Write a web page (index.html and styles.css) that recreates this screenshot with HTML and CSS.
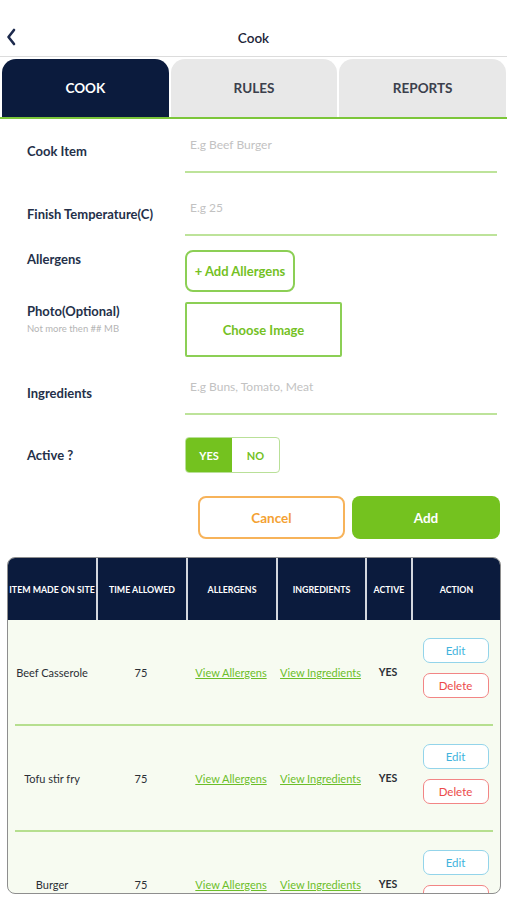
FILE: index.html
```html
<!DOCTYPE html>
<html lang="en">
<head>
<meta charset="utf-8">
<title>Cook</title>
<link rel="stylesheet" href="styles.css">
</head>
<body>
<header class="topbar">
  <span class="back" aria-label="Back">
    <svg width="10" height="18" viewBox="0 0 10 18"><polyline points="8,2 2.5,9 8,16" fill="none" stroke="#1d2a4d" stroke-width="2.6" stroke-linecap="round" stroke-linejoin="round"/></svg>
  </span>
  <h1 class="title">Cook</h1>
</header>

<nav class="tabs">
  <div class="tab active">COOK</div>
  <div class="tab">RULES</div>
  <div class="tab">REPORTS</div>
</nav>

<form class="form">
  <div class="row row-input row-1">
    <label class="label">Cook Item</label>
    <div class="field">E.g Beef Burger</div>
  </div>
  <div class="row row-input row-2">
    <label class="label">Finish Temperature(C)</label>
    <div class="field">E.g 25</div>
  </div>
  <div class="row row-top row-3">
    <label class="label">Allergens</label>
    <div class="control"><span class="btn-outline">+ Add Allergens</span></div>
  </div>
  <div class="row row-top row-4">
    <div class="label-group">
      <label class="label">Photo(Optional)</label>
      <div class="sublabel">Not more then ## MB</div>
    </div>
    <div class="control"><span class="choose">Choose Image</span></div>
  </div>
  <div class="row row-input row-5">
    <label class="label">Ingredients</label>
    <div class="field">E.g Buns, Tomato, Meat</div>
  </div>
  <div class="row row-input row-6">
    <label class="label">Active ?</label>
    <div class="control">
      <div class="toggle"><span class="opt on">YES</span><span class="opt">NO</span></div>
    </div>
  </div>
  <div class="actions">
    <span class="btn cancel">Cancel</span>
    <span class="btn add">Add</span>
  </div>
</form>

<section class="table">
  <div class="thead">
    <div class="th">ITEM MADE ON SITE</div>
    <div class="th">TIME ALLOWED</div>
    <div class="th">ALLERGENS</div>
    <div class="th">INGREDIENTS</div>
    <div class="th">ACTIVE</div>
    <div class="th">ACTION</div>
  </div>
  <div class="tbody">
    <div class="tr">
      <div class="td">Beef Casserole</div>
      <div class="td">75</div>
      <div class="td"><span class="link">View Allergens</span></div>
      <div class="td"><span class="link">View Ingredients</span></div>
      <div class="td strong">YES</div>
      <div class="td act"><span class="mini edit">Edit</span><span class="mini del">Delete</span></div>
    </div>
    <div class="sep"></div>
    <div class="tr">
      <div class="td">Tofu stir fry</div>
      <div class="td">75</div>
      <div class="td"><span class="link">View Allergens</span></div>
      <div class="td"><span class="link">View Ingredients</span></div>
      <div class="td strong">YES</div>
      <div class="td act"><span class="mini edit">Edit</span><span class="mini del">Delete</span></div>
    </div>
    <div class="sep"></div>
    <div class="tr">
      <div class="td">Burger</div>
      <div class="td">75</div>
      <div class="td"><span class="link">View Allergens</span></div>
      <div class="td"><span class="link">View Ingredients</span></div>
      <div class="td strong">YES</div>
      <div class="td act"><span class="mini edit">Edit</span><span class="mini del">Delete</span></div>
    </div>
  </div>
</section>
</body>
</html>
```

FILE: styles.css
```css
* { box-sizing: border-box; }
html, body { margin: 0; padding: 0; background: #fff; }
body {
  width: 507px;
  height: 900px;
  overflow: hidden;
  font-family: Lato, "Open Sans", Arial, sans-serif;
  color: #243049;
}

/* top bar */
.topbar {
  height: 57px;
  border-bottom: 1px solid #dcdcdc;
  display: flex;
  justify-content: center;
  padding-top: 28px;
  position: relative;
}
.back {
  position: absolute;
  left: 6px;
  top: 28px;
  display: block;
  width: 10px;
  height: 18px;
}
.back svg { display: block; }
.title {
  margin: 0;
  font-size: 13.5px;
  line-height: 20px;
  font-weight: 600;
  color: #1c2438;
}

/* tabs */
.tabs {
  display: flex;
  gap: 2px;
  margin-top: 2px;
  padding: 0 1px 0 2px;
  height: 60px;
  border-bottom: 2px solid #7cc63a;
}
.tab {
  flex: 1;
  border-radius: 14px 14px 0 0;
  background: #e8e8e8;
  color: #3b404c;
  display: flex;
  align-items: center;
  justify-content: center;
  font-size: 13.5px;
  font-weight: 700;
}
.tab.active { background: #0b1b3d; color: #fff; }

/* form */
.form { padding: 0 10px 0 27px; }
.row { display: flex; }
.row-input { align-items: center; }
.row-top { align-items: flex-start; }
.label, .label-group { width: 158px; flex: none; }
.label {
  display: block;
  font-size: 13px;
  line-height: 18px;
  font-weight: 700;
  color: #243049;
}
.row-input .label { margin-top: -4px; }
.row-6 .label { margin-top: 0; }
.sublabel {
  font-size: 9.5px;
  line-height: 14px;
  color: #b5b5b5;
  margin-top: 2px;
}
.field {
  flex: 1;
  height: 41px;
  padding: 3px 0 0 5px;
  font-size: 12px;
  line-height: 20px;
  color: #c2c2c2;
  border-bottom: 2px solid #bde39a;
}
.control { flex: 1; display: flex; }

.row-1 { margin-top: 13px; }
.row-2 { margin-top: 22px; }
.row-3 { margin-top: 14px; }
.row-4 { margin-top: 10px; }
.row-5 { margin-top: 17px; }
.row-6 { margin-top: 22px; }

.btn-outline {
  width: 110px;
  height: 42px;
  border: 2px solid #8ccf55;
  border-radius: 8px;
  display: flex;
  align-items: center;
  justify-content: center;
  font-size: 13px;
  font-weight: 700;
  color: #74c124;
}
.choose {
  width: 157px;
  height: 55px;
  border: 2px solid #8ccf55;
  border-radius: 2px;
  display: flex;
  align-items: center;
  justify-content: center;
  font-size: 13px;
  font-weight: 700;
  color: #74c124;
}
.toggle {
  display: flex;
  width: 95px;
  height: 36px;
  border: 1.5px solid #b9e098;
  border-radius: 4px;
  overflow: hidden;
}
.opt {
  flex: 1;
  display: flex;
  align-items: center;
  justify-content: center;
  font-size: 11px;
  font-weight: 700;
  color: #74c124;
}
.opt.on { flex: none; width: 46px; background: #74c21f; color: #fff; }

.actions {
  display: flex;
  justify-content: flex-end;
  gap: 7px;
  margin-top: 23px;
  margin-right: -3px;
}
.btn {
  height: 43px;
  border-radius: 8px;
  display: flex;
  align-items: center;
  justify-content: center;
  font-size: 13.5px;
  font-weight: 700;
}
.cancel { width: 147px; border: 2px solid #f7b35a; color: #f4a133; }
.add { width: 148px; background: #74c21f; color: #fff; }

/* table */
.table {
  margin: 18px 0 0 7px;
  width: 494px;
  height: 337px;
  border: 1px solid #8e8e8e;
  border-radius: 8px;
  overflow: hidden;
  background: #f7fbf1;
}
.thead, .tr {
  display: grid;
  grid-template-columns: 88px 90px 90px 89px 46px 1fr;
}
.thead {
  height: 62px;
  background: #0b1b3d;
}
.th {
  display: flex;
  align-items: center;
  justify-content: center;
  text-align: center;
  color: #fff;
  font-size: 8.8px;
  font-weight: 700;
  white-space: nowrap;
}
.th + .th { border-left: 2px solid #d3d7de; }
.tr { align-items: center; }
.td {
  text-align: center;
  font-size: 11px;
  color: #2c2f36;
  white-space: nowrap;
}
.td.strong { font-weight: 700; font-size: 10.5px; }
.link { color: #6cbe2a; text-decoration: underline; }
.act {
  display: flex;
  flex-direction: column;
  align-items: center;
  gap: 10px;
  padding: 18px 0 26px 0;
}
.mini {
  width: 66px;
  height: 25px;
  border-radius: 7px;
  display: flex;
  align-items: center;
  justify-content: center;
  font-size: 11.5px;
  background: #fff;
}
.edit { border: 1.5px solid #93d4ea; color: #41b3dd; }
.del { border: 1.5px solid #f28585; color: #ec4a4a; }
.sep {
  height: 2px;
  margin: 0 7px;
  background: #b6df8f;
}
```
